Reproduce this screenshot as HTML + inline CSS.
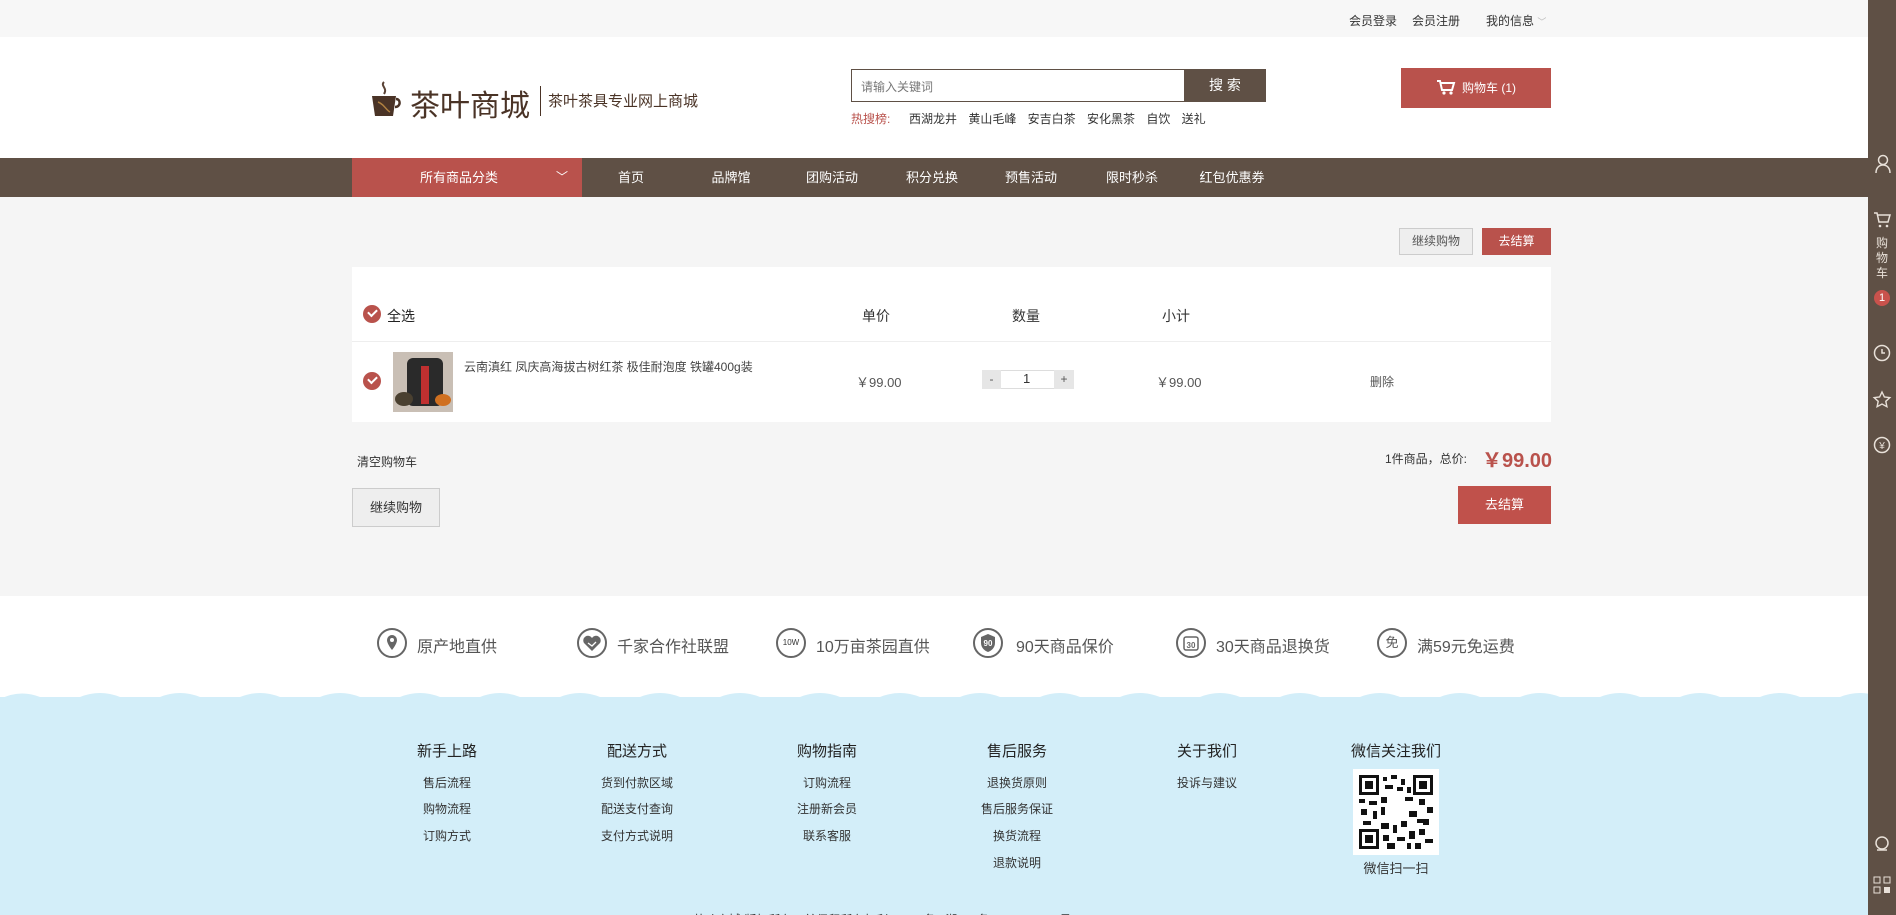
<!DOCTYPE html>
<html><head><meta charset="utf-8"><style>
*{margin:0;padding:0;box-sizing:border-box}
html,body{width:1896px;height:915px;overflow:hidden}
body{position:relative;background:#d3eef9;font-family:"Liberation Sans","Noto Sans CJK SC",sans-serif;color:#333;font-size:12px}
.a{position:absolute;white-space:nowrap}
.nav span{position:absolute;top:0;line-height:39px;color:#fff;font-size:14px;transform:translateX(-50%)}
.chk{position:absolute;width:18px;height:18px;border-radius:50%;background:#b9524c}
.chk:after{content:"";position:absolute;left:5px;top:4px;width:7px;height:4px;border-left:2px solid #fff;border-bottom:2px solid #fff;transform:rotate(-45deg)}
.fi{position:absolute;top:628px;width:30px;height:30px;border:2px solid #666;border-radius:50%}
.ft{position:absolute;top:633px;font-size:16px;color:#555}
.fh{position:absolute;top:740px;font-size:15px;color:#222;transform:translateX(-50%)}
.fl{position:absolute;font-size:12px;color:#333;transform:translateX(-50%)}
</style></head><body>
<div class="a" style="left:0;top:0;width:1868px;height:697px;background:#fff"></div>
<div class="a" style="left:0;top:0;width:1868px;height:37px;background:#f7f7f7"></div>
<div class="a" style="left:1349px;top:12px;font-size:12px">会员登录</div>
<div class="a" style="left:1412px;top:12px;font-size:12px">会员注册</div>
<div class="a" style="left:1486px;top:12px;font-size:12px">我的信息 <span style="color:#bbb;font-size:9px">﹀</span></div>

<svg class="a" style="left:370px;top:80px" width="32" height="38" viewBox="0 0 32 38"><path d="M14 2c-4 4 4 6 0 12" stroke="#5a4335" stroke-width="2" fill="none"/><path d="M2 16h24l-3 20H5z" fill="#4a3326"/><path d="M26 19c5 0 5 8-1 8" stroke="#4a3326" stroke-width="2.5" fill="none"/><path d="M8 22c6 2 8 8 12 10" stroke="#b08040" stroke-width="1.5" fill="none"/></svg>
<div class="a" style="left:410px;top:81px;font-size:30px;color:#4a3326">茶叶商城</div>
<div class="a" style="left:540px;top:86px;width:1px;height:30px;background:#4a3326"></div>
<div class="a" style="left:548px;top:90px;font-size:15px;color:#4a3326">茶叶茶具专业网上商城</div>

<div class="a" style="left:851px;top:69px;width:334px;height:33px;border:1px solid #5f5045;background:#fff"></div>
<div class="a" style="left:861px;top:78px;font-size:12px;color:#777">请输入关键词</div>
<div class="a" style="left:1184px;top:69px;width:82px;height:33px;background:#5f5045;color:#fff;font-size:14px;text-align:center;line-height:33px">搜 索</div>
<div class="a" style="left:851px;top:110px;font-size:12px;color:#b9524c">热搜榜:</div>
<div class="a" style="left:909px;top:110px;font-size:12px;color:#333;word-spacing:8px">西湖龙井 黄山毛峰 安吉白茶 安化黑茶 自饮 送礼</div>

<div class="a" style="left:1401px;top:68px;width:150px;height:40px;background:#b9524c;color:#fff;font-size:12px;line-height:40px;text-align:center"><svg width="20" height="16" viewBox="0 0 20 16" style="vertical-align:-3px;margin-right:6px"><path d="M1 2h3l2 9h10l2-7H5" stroke="#fff" stroke-width="2" fill="none"/><circle cx="8" cy="14" r="1.6" fill="#fff"/><circle cx="15" cy="14" r="1.6" fill="#fff"/></svg>购物车 (1)</div>

<div class="a nav" style="left:0;top:158px;width:1868px;height:39px;background:#5f5045">
<div class="a" style="left:352px;top:0;width:230px;height:39px;background:#b9524c"></div>
<span style="left:459px;font-size:13px">所有商品分类</span><span style="left:562px;font-size:12px">﹀</span>
<span style="left:631px;font-size:13px">首页</span><span style="left:731px;font-size:13px">品牌馆</span><span style="left:832px;font-size:13px">团购活动</span><span style="left:932px;font-size:13px">积分兑换</span><span style="left:1031px;font-size:13px">预售活动</span><span style="left:1132px;font-size:13px">限时秒杀</span><span style="left:1232px;font-size:13px">红包优惠券</span>
</div>

<div class="a" style="left:0;top:197px;width:1868px;height:399px;background:#f5f5f5"></div>
<div class="a" style="left:1399px;top:228px;width:74px;height:27px;border:1px solid #ccc;background:#eee;color:#555;font-size:12px;text-align:center;line-height:25px">继续购物</div>
<div class="a" style="left:1482px;top:228px;width:69px;height:27px;background:#b9524c;color:#fff;font-size:12px;text-align:center;line-height:27px">去结算</div>

<div class="a" style="left:352px;top:267px;width:1199px;height:155px;background:#fff"></div>
<div class="a" style="left:352px;top:341px;width:1199px;height:1px;background:#eee"></div>
<div class="chk" style="left:363px;top:305px"></div>
<div class="a" style="left:387px;top:306px;font-size:14px;color:#222">全选</div>
<div class="a" style="left:862px;top:306px;font-size:14px">单价</div>
<div class="a" style="left:1012px;top:306px;font-size:14px">数量</div>
<div class="a" style="left:1162px;top:306px;font-size:14px">小计</div>
<div class="chk" style="left:363px;top:372px"></div>
<div class="a" style="left:393px;top:352px;width:60px;height:60px;background:#c9bfb5"><div class="a" style="left:14px;top:6px;width:36px;height:48px;background:#2a2a2a;border-radius:6px"></div><div class="a" style="left:28px;top:14px;width:8px;height:38px;background:#c03030"></div><div class="a" style="left:2px;top:40px;width:18px;height:14px;background:#4a4030;border-radius:50%"></div><div class="a" style="left:42px;top:42px;width:16px;height:12px;background:#d07020;border-radius:50%"></div></div>
<div class="a" style="left:464px;top:358px;font-size:12px;color:#444">云南滇红 凤庆高海拔古树红茶 极佳耐泡度 铁罐400g装</div>
<div class="a" style="left:856px;top:372px;font-size:13px;color:#555">￥99.00</div>
<div class="a" style="left:982px;top:370px;width:92px;height:19px;border:1px solid #ddd;background:#fff"></div>
<div class="a" style="left:982px;top:370px;width:19px;height:19px;background:#e6e6e6;text-align:center;line-height:19px;color:#555">-</div>
<div class="a" style="left:1054px;top:370px;width:20px;height:19px;background:#e6e6e6;text-align:center;line-height:19px;color:#555">+</div>
<div class="a" style="left:1023px;top:371px;font-size:13px">1</div>
<div class="a" style="left:1156px;top:372px;font-size:13px;color:#555">￥99.00</div>
<div class="a" style="left:1370px;top:373px;font-size:12px;color:#555">删除</div>

<div class="a" style="left:357px;top:453px;font-size:12px">清空购物车</div>
<div class="a" style="left:1385px;top:450px;font-size:12px">1件商品，总价:</div>
<div class="a" style="left:1482px;top:444px;font-size:20px;font-weight:bold;color:#b9524c">￥99.00</div>
<div class="a" style="left:352px;top:488px;width:88px;height:39px;border:1px solid #ccc;background:#eee;font-size:13px;text-align:center;line-height:37px">继续购物</div>
<div class="a" style="left:1458px;top:486px;width:93px;height:38px;background:#c0514b;color:#fff;font-size:13px;text-align:center;line-height:38px">去结算</div>

<div class="fi" style="left:377px"><svg width="26" height="26" viewBox="0 0 26 26"><path d="M13 5a5 5 0 0 0-5 5c0 4 5 10 5 10s5-6 5-10a5 5 0 0 0-5-5z" fill="#666"/><circle cx="13" cy="10" r="2" fill="#fff"/></svg></div><div class="ft" style="left:417px">原产地直供</div>
<div class="fi" style="left:577px"><svg width="26" height="26" viewBox="0 0 26 26"><path d="M13 21L5 13a4 4 0 0 1 8-5 4 4 0 0 1 8 5z" fill="#666"/><path d="M9 13l4 3 4-4" stroke="#fff" stroke-width="1.3" fill="none"/></svg></div><div class="ft" style="left:617px">千家合作社联盟</div>
<div class="fi" style="left:776px;font-size:8px;text-align:center;line-height:26px">10W</div><div class="ft" style="left:816px">10万亩茶园直供</div>
<div class="fi" style="left:973px"><svg width="26" height="26" viewBox="0 0 26 26"><path d="M6 7l7-3 7 3v6c0 5-4 8-7 9-3-1-7-4-7-9z" fill="#666"/><text x="13" y="16" font-size="8" fill="#fff" text-anchor="middle" font-weight="bold">90</text></svg></div><div class="ft" style="left:1016px">90天商品保价</div>
<div class="fi" style="left:1176px;border-radius:50%"><svg width="26" height="26" viewBox="0 0 26 26"><rect x="6" y="7" width="14" height="13" rx="2" stroke="#666" stroke-width="1.5" fill="none"/><text x="13" y="18" font-size="8" fill="#666" text-anchor="middle" font-weight="bold">30</text></svg></div><div class="ft" style="left:1216px">30天商品退换货</div>
<div class="fi" style="left:1377px;text-align:center;line-height:26px;font-size:13px;color:#555">免</div><div class="ft" style="left:1417px">满59元免运费</div>

<svg class="a" style="left:0;top:685px" width="1868" height="30"><path d="M0 14 Q20 4 40 12 T80 12 T120 12 T160 12 T200 12 T240 12 T280 12 T320 12 T360 12 T400 12 T440 12 T480 12 T520 12 T560 12 T600 12 T640 12 T680 12 T720 12 T760 12 T800 12 T840 12 T880 12 T920 12 T960 12 T1000 12 T1040 12 T1080 12 T1120 12 T1160 12 T1200 12 T1240 12 T1280 12 T1320 12 T1360 12 T1400 12 T1440 12 T1480 12 T1520 12 T1560 12 T1600 12 T1640 12 T1680 12 T1720 12 T1760 12 T1800 12 T1840 12 T1880 12 V30 H0Z" fill="#d3eef9"/></svg>

<div class="fh" style="left:447px">新手上路</div><div class="fh" style="left:637px">配送方式</div><div class="fh" style="left:827px">购物指南</div><div class="fh" style="left:1017px">售后服务</div><div class="fh" style="left:1207px">关于我们</div><div class="fh" style="left:1396px">微信关注我们</div>
<div class="fl" style="left:447px;top:774px">售后流程</div><div class="fl" style="left:447px;top:800px">购物流程</div><div class="fl" style="left:447px;top:827px">订购方式</div>
<div class="fl" style="left:637px;top:774px">货到付款区域</div><div class="fl" style="left:637px;top:800px">配送支付查询</div><div class="fl" style="left:637px;top:827px">支付方式说明</div>
<div class="fl" style="left:827px;top:774px">订购流程</div><div class="fl" style="left:827px;top:800px">注册新会员</div><div class="fl" style="left:827px;top:827px">联系客服</div>
<div class="fl" style="left:1017px;top:774px">退换货原则</div><div class="fl" style="left:1017px;top:800px">售后服务保证</div><div class="fl" style="left:1017px;top:827px">换货流程</div><div class="fl" style="left:1017px;top:854px">退款说明</div>
<div class="fl" style="left:1207px;top:774px">投诉与建议</div>
<div class="a" style="left:1353px;top:769px;width:86px;height:86px;background:#fff;padding:6px">
<svg width="74" height="74" viewBox="0 0 74 74"><rect x="0" y="0" width="74" height="74" fill="#fff"/><g fill="#111"><rect x="0" y="0" width="20" height="20"/><rect x="54" y="0" width="20" height="20"/><rect x="0" y="54" width="20" height="20"/></g><g fill="#fff"><rect x="3" y="3" width="14" height="14"/><rect x="57" y="3" width="14" height="14"/><rect x="3" y="57" width="14" height="14"/></g><g fill="#111"><rect x="6" y="6" width="8" height="8"/><rect x="60" y="6" width="8" height="8"/><rect x="6" y="60" width="8" height="8"/>
<path d="M24 2h4v4h-4zM32 0h6v4h-6zM42 4h4v6h-4zM26 10h8v4h-8zM38 12h6v4h-6zM0 24h6v4H0zM10 26h8v4h-8zM22 22h6v6h-6zM46 22h8v4h-8zM60 24h6v6h-6zM68 32h6v6h-6zM2 34h6v6H2zM14 36h4v8h-4zM50 36h8v6h-8zM58 44h8v4h-8zM4 46h8v4H4zM22 48h8v6h-8zM34 50h4v8h-4zM42 46h6v6h-6zM24 60h6v6h-6zM38 62h8v4h-8zM50 56h6v8h-6zM60 54h6v6h-6zM66 64h8v4h-8zM28 68h8v6h-8zM56 68h6v6h-6zM48 68h4v6h-4zM22 32h4v8h-4zM48 12h4v6h-4zM64 44h6v6h-6z"/></g><circle cx="37" cy="37" r="7" fill="#fff"/></svg></div>
<div class="fl" style="left:1396px;top:858px;font-size:13px">微信扫一扫</div>
<div class="a" style="left:620px;top:911px;font-size:12px;color:#333">© 2018-2022 茶叶商城 版权所有，并保留所有权利。 ICP备 | 湘ICP备 0000000000号</div>

<div class="a" style="left:1868px;top:0;width:28px;height:915px;background:#5f5045"></div>
<svg class="a" style="left:1874px;top:154px" width="18" height="20" viewBox="0 0 18 20"><circle cx="9" cy="6" r="4.5" stroke="#e8e0d8" stroke-width="1.5" fill="none"/><path d="M2 19c0-5 3-8 7-8s7 3 7 8" stroke="#e8e0d8" stroke-width="1.5" fill="none"/></svg>
<svg class="a" style="left:1873px;top:211px" width="18" height="18" viewBox="0 0 18 18"><path d="M1 2h3l2 9h9l2-7H5" stroke="#e8e0d8" stroke-width="1.5" fill="none"/><circle cx="7" cy="15" r="1.3" fill="#e8e0d8"/><circle cx="14" cy="15" r="1.3" fill="#e8e0d8"/></svg>
<div class="a" style="left:1868px;top:236px;width:28px;text-align:center;color:#e8e0d8;font-size:12px;line-height:15px">购<br>物<br>车</div>
<div class="a" style="left:1874px;top:290px;width:16px;height:16px;border-radius:50%;background:#c9524c;color:#fff;font-size:11px;text-align:center;line-height:16px">1</div>
<svg class="a" style="left:1872px;top:343px" width="20" height="20"><circle cx="10" cy="10" r="7.5" stroke="#e8e0d8" stroke-width="1.5" fill="none"/><path d="M10 6v4h3" stroke="#e8e0d8" stroke-width="1.5" fill="none"/></svg>
<svg class="a" style="left:1872px;top:390px" width="20" height="20" viewBox="0 0 20 20"><path d="M10 2l2.4 5 5.4.6-4 3.7 1.1 5.4L10 14l-4.9 2.7 1.1-5.4-4-3.7 5.4-.6z" stroke="#e8e0d8" stroke-width="1.4" fill="none"/></svg>
<svg class="a" style="left:1872px;top:435px" width="20" height="20"><circle cx="10" cy="10" r="7.5" stroke="#e8e0d8" stroke-width="1.5" fill="none"/><text x="10" y="14" font-size="10" fill="#e8e0d8" text-anchor="middle">¥</text></svg>
<svg class="a" style="left:1873px;top:835px" width="18" height="18"><circle cx="9" cy="8" r="6" stroke="#e8e0d8" stroke-width="1.5" fill="none"/><path d="M4 15h10" stroke="#e8e0d8" stroke-width="1.5"/></svg>
<svg class="a" style="left:1873px;top:876px" width="18" height="18"><rect x="1" y="1" width="6" height="6" stroke="#e8e0d8" fill="none"/><rect x="11" y="1" width="6" height="6" stroke="#e8e0d8" fill="none"/><rect x="1" y="11" width="6" height="6" stroke="#e8e0d8" fill="none"/><rect x="11" y="11" width="6" height="6" fill="#e8e0d8"/></svg>
</body></html>
